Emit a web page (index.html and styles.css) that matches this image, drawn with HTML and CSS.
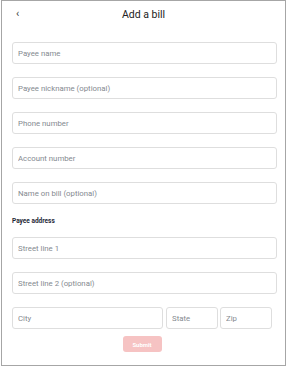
FILE: index.html
```html
<!DOCTYPE html>
<html>
<head>
<meta charset="utf-8">
<link rel="stylesheet" href="styles.css">
</head>
<body>
<div class="frame">
  <header class="header">
    <span class="back">‹</span>
    <h1 class="title">Add a bill</h1>
  </header>
  <form class="form">
    <input class="field" placeholder="Payee name">
    <input class="field" placeholder="Payee nickname (optional)">
    <input class="field" placeholder="Phone number">
    <input class="field" placeholder="Account number">
    <input class="field" placeholder="Name on bill (optional)">
    <div class="section-label">Payee address</div>
    <input class="field" placeholder="Street line 1">
    <input class="field" placeholder="Street line 2 (optional)">
    <div class="row">
      <input class="field city" placeholder="City">
      <input class="field state" placeholder="State">
      <input class="field zip" placeholder="Zip">
    </div>
    <div class="actions">
      <button type="button" class="submit">Submit</button>
    </div>
  </form>
</div>
</body>
</html>
```
FILE: styles.css
```css
* { box-sizing: border-box; }
html, body { margin: 0; padding: 0; background: #fff; }
body { font-family: Roboto, "Liberation Sans", sans-serif; }
.frame {
  margin-left: 1px;
  width: 285px;
  height: 366px;
  border: 1px solid #a6a6a6;
  background: #fff;
}
.header {
  position: relative;
  height: 41px;
  display: flex;
  align-items: flex-start;
  justify-content: center;
}
.back {
  position: absolute;
  left: 14px;
  top: 6px;
  font-size: 11px;
  color: #444;
  line-height: 14px;
}
.title {
  margin: 7px 0 0 0;
  font-size: 10.5px;
  font-weight: 400;
  color: #222;
  line-height: 14px;
}
.form {
  display: flex;
  flex-direction: column;
  padding-left: 10px;
}
.field {
  display: block;
  width: 265px;
  height: 22px;
  margin: 0 0 13px 0;
  padding: 0 0 0 5px;
  border: 1px solid #dedede;
  border-radius: 3px;
  font-family: Roboto, "Liberation Sans", sans-serif;
  font-size: 7.8px;
  color: #444;
  background: #fff;
  outline: none;
}
.field::placeholder { color: #858a90; }
.section-label {
  margin: -1px 0 11px 0;
  height: 10px;
  line-height: 10px;
  font-size: 6.5px;
  font-weight: 700;
  color: #1e2838;
}
.row {
  display: flex;
  width: 260px;
  margin: 0;
}
.row .field { margin: 0; }
.city { width: 151px; margin-right: 3px !important; }
.state { width: 52px; margin-right: 2px !important; }
.zip { width: 52px; }
.actions {
  width: 260px;
  display: flex;
  justify-content: center;
  margin-top: 7px;
}
.submit {
  width: 39px;
  height: 16px;
  padding: 0;
  border: none;
  border-radius: 3px;
  background: #f6c3c3;
  color: #fff;
  font-family: Roboto, "Liberation Sans", sans-serif;
  font-size: 6px;
  font-weight: 700;
}
```
